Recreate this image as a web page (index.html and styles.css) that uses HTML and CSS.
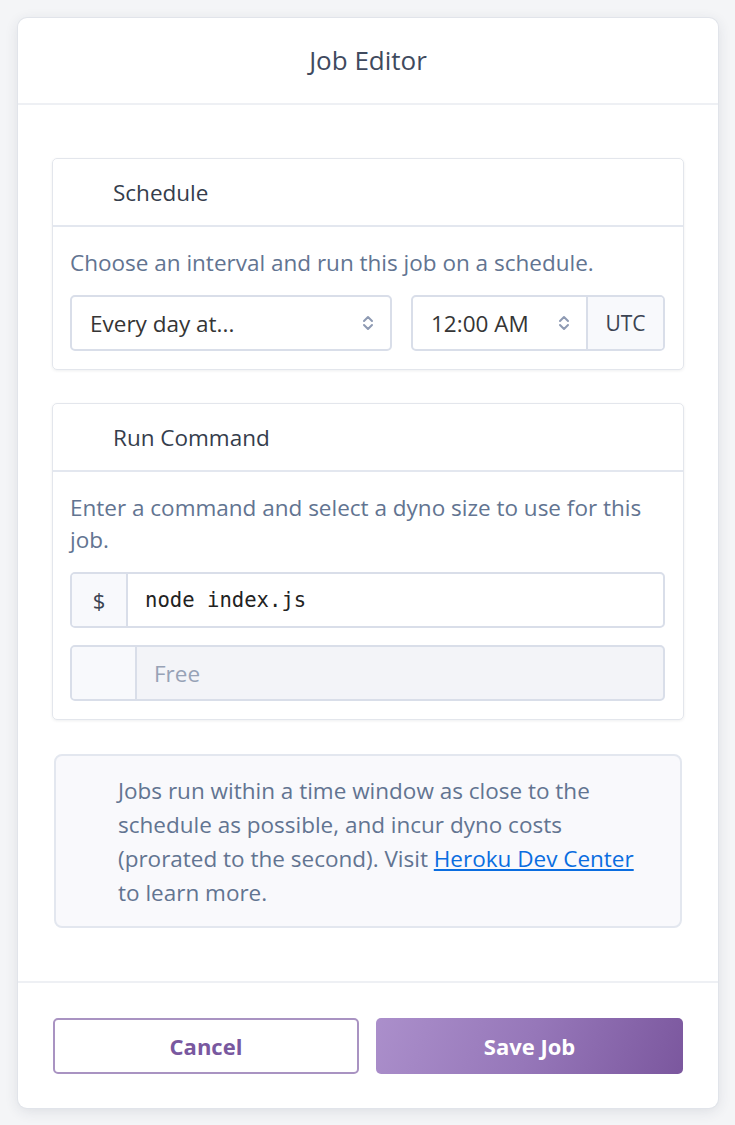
FILE: index.html
```html
<!DOCTYPE html>
<html>
<head>
<meta charset="utf-8">
<link rel="stylesheet" href="styles.css">
</head>
<body>
<div class="modal">
  <div class="modal-header">Job Editor</div>
  <div class="modal-body">
    <section class="panel">
      <div class="panel-title">Schedule</div>
      <div class="panel-body">
        <p class="hint">Choose an interval and run this job on a schedule.</p>
        <div class="row">
          <div class="select select-interval">
            <span>Every day at...</span>
            <svg class="caret" width="12" height="18" viewBox="0 0 12 18"><path d="M2 7 L6 3 L10 7 M2 11 L6 15 L10 11" fill="none" stroke="#8e9ab3" stroke-width="2" stroke-linecap="round" stroke-linejoin="round"/></svg>
          </div>
          <div class="group group-time">
            <div class="select select-time">
              <span>12:00 AM</span>
              <svg class="caret" width="12" height="18" viewBox="0 0 12 18"><path d="M2 7 L6 3 L10 7 M2 11 L6 15 L10 11" fill="none" stroke="#8e9ab3" stroke-width="2" stroke-linecap="round" stroke-linejoin="round"/></svg>
            </div>
            <div class="addon addon-utc">UTC</div>
          </div>
        </div>
      </div>
    </section>

    <section class="panel">
      <div class="panel-title">Run Command</div>
      <div class="panel-body">
        <p class="hint">Enter a command and select a dyno size to use for this job.</p>
        <div class="group group-cmd">
          <div class="addon addon-dollar">$</div>
          <div class="cmd">node index.js</div>
        </div>
        <div class="group group-dyno">
          <div class="addon addon-blank"></div>
          <div class="dyno">Free</div>
        </div>
      </div>
    </section>

    <div class="info">
      Jobs run within a time window as close to the schedule as possible, and incur dyno costs (prorated to the second). Visit <a href="#">Heroku Dev Center</a> to learn more.
    </div>
  </div>
  <div class="modal-footer">
    <button class="btn btn-cancel">Cancel</button>
    <button class="btn btn-save">Save Job</button>
  </div>
</div>
</body>
</html>
```

FILE: styles.css
```css
* { box-sizing: border-box; }
html, body { margin: 0; padding: 0; }
body {
  background: #f4f5f7;
  font-family: "Open Sans", "Noto Sans", sans-serif;
  padding: 18px 17px 17px 18px;
  width: 735px;
  height: 1125px;
}
.modal {
  width: 700px;
  background: #fff;
  border-radius: 9px;
  box-shadow: 0 0 0 1px #e1e4ea, 0 3px 14px rgba(40, 50, 70, 0.12);
  overflow: hidden;
}
.modal-header {
  height: 87px;
  border-bottom: 2px solid #eef0f4;
  display: flex;
  align-items: center;
  justify-content: center;
  font-size: 26px;
  color: #3f4a5e;
  padding-bottom: 2px;
}
.modal-body {
  padding: 53px 34px 53px 34px;
  display: flex;
  flex-direction: column;
  gap: 33px;
}
.panel {
  border: 1px solid #e3e6ec;
  border-radius: 5px;
  box-shadow: 0 1px 3px rgba(40, 50, 70, 0.08);
}
.panel-title {
  height: 68px;
  border-bottom: 2px solid #e3e7ef;
  display: flex;
  align-items: center;
  padding-left: 60px;
  font-size: 22.5px;
  color: #353d4c;
}
.panel-body {
  padding: 20px 18px 18px 17px;
}
.hint {
  margin: 0 0 16px 0;
  font-size: 22.5px;
  line-height: 32px;
  color: #627491;
}
.row {
  display: flex;
  gap: 19px;
}
.select {
  height: 56px;
  border: 2px solid #d9dee9;
  border-radius: 5px;
  display: flex;
  align-items: center;
  justify-content: space-between;
  padding: 0 16px 0 18px;
  font-size: 22.5px;
  color: #353535;
}
.select-interval { width: 322px; }
.group {
  display: flex;
  border: 2px solid #d9dee9;
  border-radius: 5px;
  overflow: hidden;
}
.group-time { width: 254px; height: 56px; }
.group .select { border: none; border-radius: 0; height: 52px; }
.select-time { width: 175px; border-right: 2px solid #d9dee9 !important; padding-left: 18px; }
.addon {
  background: #f8f9fc;
  display: flex;
  align-items: center;
  justify-content: center;
  font-size: 21px;
  color: #3b4352;
}
.addon-utc { flex: 1; }
.group-cmd { height: 56px; }
.addon-dollar { width: 56px; border-right: 2px solid #d9dee9; font-size: 22px; }
.cmd {
  flex: 1;
  display: flex;
  align-items: center;
  padding-left: 17px;
  font-family: "DejaVu Sans Mono", monospace;
  font-size: 20.6px;
  color: #222;
}
.group-dyno { height: 56px; margin-top: 17px; background: #f3f4f8; }
.addon-blank { width: 65px; border-right: 2px solid #d9dee9; background: #f8f9fc; }
.dyno {
  flex: 1;
  display: flex;
  align-items: center;
  padding-left: 17px;
  font-size: 22.5px;
  color: #97a2b6;
}
.info {
  margin: 1px 2px 0 2px;
  background: #f9f9fc;
  border: 2px solid #e3e7ef;
  border-radius: 8px;
  padding: 18px 40px 16px 62px;
  font-size: 22.5px;
  line-height: 34px;
  color: #627491;
}
.info a { color: #0a6de0; text-decoration: underline; }
.modal-footer {
  border-top: 2px solid #eef0f4;
  padding: 35px 34px 34px 35px;
  display: flex;
  gap: 17px;
}
.btn {
  height: 56px;
  border-radius: 5px;
  font-family: "Open Sans", sans-serif;
  font-size: 22px;
  font-weight: 700;
}
.btn-cancel {
  width: 306px;
  background: #fff;
  border: 2px solid #a993c2;
  color: #79589f;
}
.btn-save {
  width: 307px;
  border: none;
  color: #fff;
  background: linear-gradient(110deg, #ab8fcb 0%, #9677b9 50%, #7b579e 100%);
}
```
